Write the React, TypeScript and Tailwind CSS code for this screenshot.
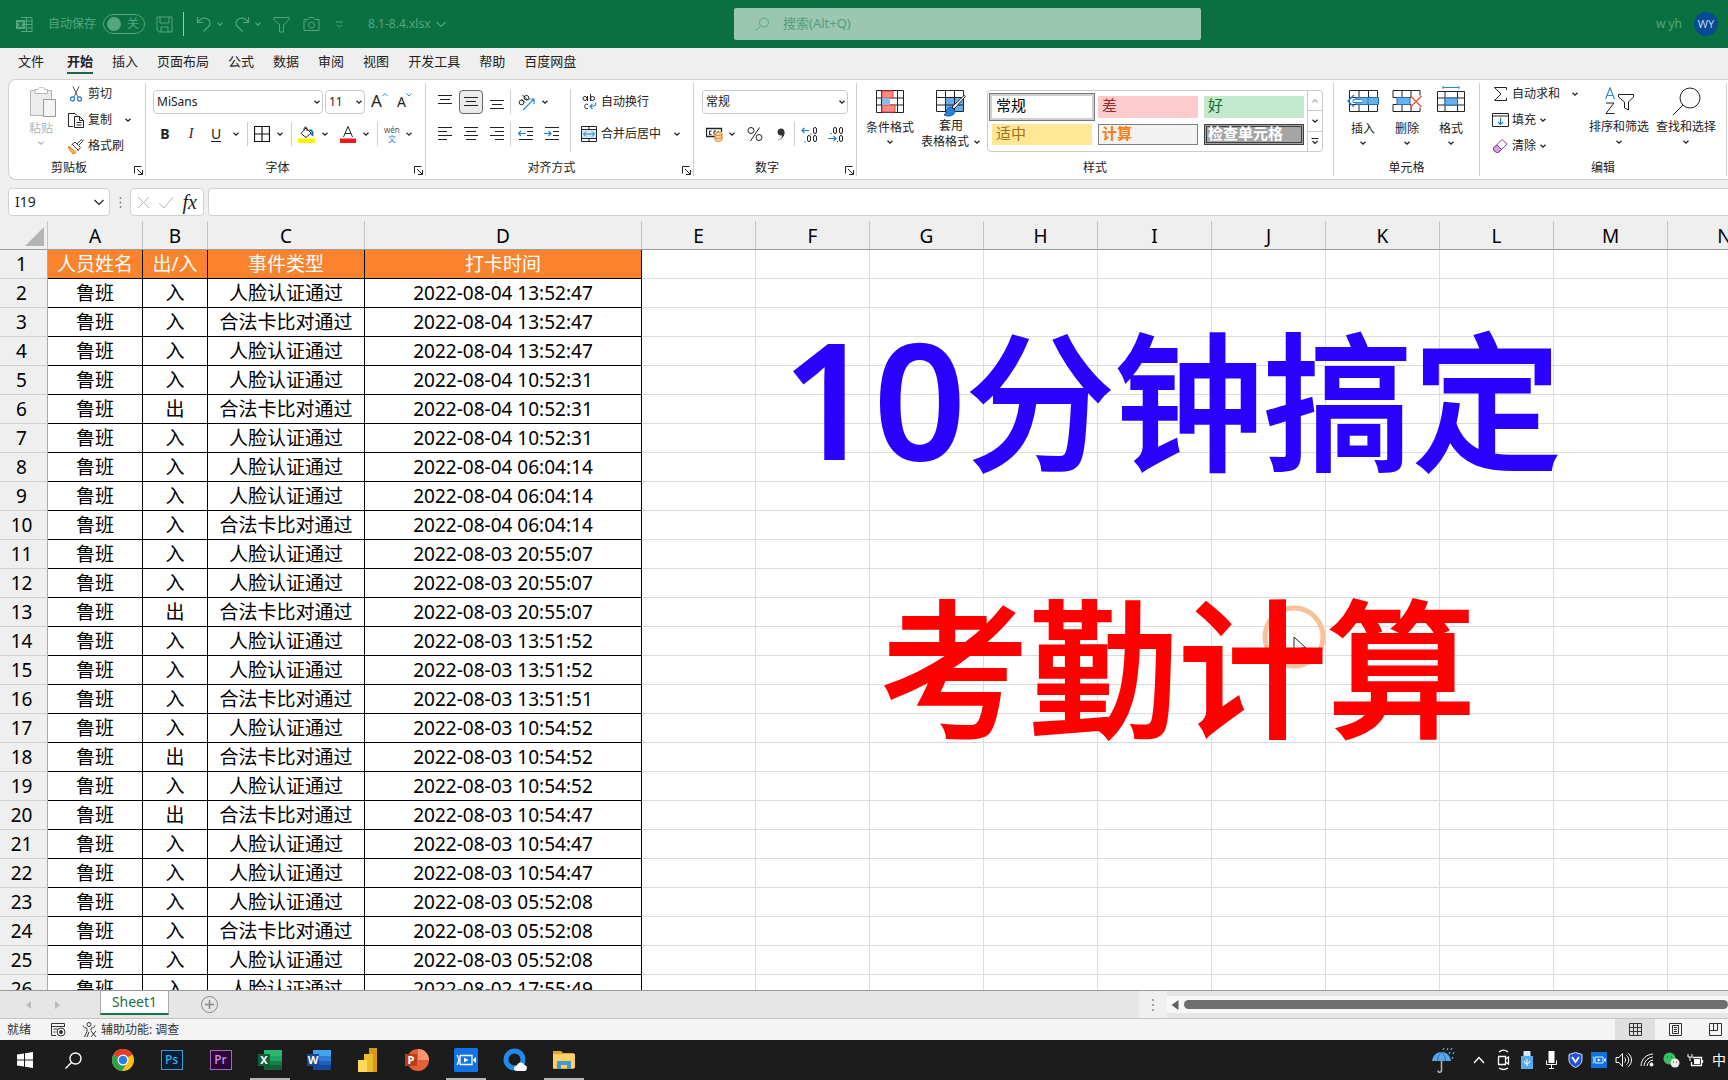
import React from 'react';

type Row = [string, string, string];

const FACE = '人脸认证通过';
const CARD = '合法卡比对通过';

const records: Row[] = [
  ['入', FACE, '2022-08-04 13:52:47'],
  ['入', CARD, '2022-08-04 13:52:47'],
  ['入', FACE, '2022-08-04 13:52:47'],
  ['入', FACE, '2022-08-04 10:52:31'],
  ['出', CARD, '2022-08-04 10:52:31'],
  ['入', FACE, '2022-08-04 10:52:31'],
  ['入', FACE, '2022-08-04 06:04:14'],
  ['入', FACE, '2022-08-04 06:04:14'],
  ['入', CARD, '2022-08-04 06:04:14'],
  ['入', FACE, '2022-08-03 20:55:07'],
  ['入', FACE, '2022-08-03 20:55:07'],
  ['出', CARD, '2022-08-03 20:55:07'],
  ['入', FACE, '2022-08-03 13:51:52'],
  ['入', FACE, '2022-08-03 13:51:52'],
  ['入', CARD, '2022-08-03 13:51:51'],
  ['入', FACE, '2022-08-03 10:54:52'],
  ['出', CARD, '2022-08-03 10:54:52'],
  ['入', FACE, '2022-08-03 10:54:52'],
  ['出', CARD, '2022-08-03 10:54:47'],
  ['入', FACE, '2022-08-03 10:54:47'],
  ['入', FACE, '2022-08-03 10:54:47'],
  ['入', FACE, '2022-08-03 05:52:08'],
  ['入', CARD, '2022-08-03 05:52:08'],
  ['入', FACE, '2022-08-03 05:52:08'],
  ['入', FACE, '2022-08-02 17:55:49'],
];

const emptyColumns = ['E', 'F', 'G', 'H', 'I', 'J', 'K', 'L', 'M', 'N'];

type SvgProps = { w?: number; h?: number; className?: string; children: React.ReactNode };

function Svg({ w = 16, h = w, className = '', children }: SvgProps) {
  return (
    <svg
      width={w}
      height={h}
      viewBox={`0 0 ${w} ${h}`}
      fill="none"
      stroke="currentColor"
      strokeWidth={1}
      className={`shrink-0 ${className}`}
      aria-hidden="true"
    >
      {children}
    </svg>
  );
}

function Chevron({ className = '' }: { className?: string }) {
  return (
    <Svg w={8} className={className}>
      <path d="M1.5 2.7 4 5.2l2.5-2.5" strokeWidth={1.3} />
    </Svg>
  );
}

function WideChevron({ className = '' }: { className?: string }) {
  return (
    <Svg w={12} className={className}>
      <path d="m1.5 4 4.5 4.5L10.5 4" strokeWidth={1.2} />
    </Svg>
  );
}

/* ---------- title bar ---------- */

function TitleBar() {
  return (
    <header className="flex h-12 shrink-0 items-center bg-[#0a7041] text-[#55a67e]">
      <div className="flex w-[734px] shrink-0 items-center pl-4">
        <Svg w={17}>
          <path d="M5 1.5h11v14H5M5 5h11M5 8.500h11M5 12h11M10.500 1.500v14" />
          <path d="M0 4h9v9H0z" fill="currentColor" stroke="none" />
          <path d="m2.500 6 4 5m0-5-4 5" stroke="#0a7041" strokeWidth={1.4} />
        </Svg>
        <span className="ml-[15px] text-xs">自动保存</span>
        <button type="button" role="switch" aria-checked="false" className="ml-[7px] flex h-5 w-[42px] items-center justify-between rounded-full border border-current px-[3px] text-xs">
          <span className="size-[14px] rounded-full bg-current" />
          <span className="mr-[2px]">关</span>
        </button>
        <button type="button" aria-label="保存" className="ml-[11px]">
          <Svg w={17}>
            <path d="M1 1h15v15H3l-2-2zM4 1v6h9V1M5 16v-5h7v5" />
          </Svg>
        </button>
        <span className="ml-[10px] h-6 w-px bg-[#8fd0ae]" />
        <button type="button" aria-label="撤消" className="ml-3 flex items-center gap-1">
          <Svg w={16}>
            <path d="M1.500 1v5.500H7M1.500 6.500C4 3 7 1.500 10.500 2.500c4 1.500 4.500 5.500 2 8L7.500 15.500" strokeWidth={1.2} />
          </Svg>
          <Chevron />
        </button>
        <button type="button" aria-label="恢复" className="ml-[10px] flex items-center gap-1">
          <Svg w={16}>
            <path d="M14.500 1v5.500H9M14.500 6.500C12 3 9 1.500 5.500 2.500c-4 1.500-4.500 5.500-2 8L8.500 15.500" strokeWidth={1.2} />
          </Svg>
          <Chevron />
        </button>
        <button type="button" aria-label="筛选" className="ml-[11px]">
          <Svg w={17}>
            <path d="M1 1.500h15v2L10.500 9v7h-4V9L1 3.500z" />
          </Svg>
        </button>
        <button type="button" aria-label="照相机" className="ml-[13px]">
          <Svg w={17}>
            <path d="M1 3.500h4l1.500-2h4l1.500 2h4v11H1z" />
            <circle cx="8.500" cy="9" r="3" />
            <path d="M2.500 5.500h1.500" />
          </Svg>
        </button>
        <button type="button" aria-label="自定义快速访问工具栏" className="ml-[15px]">
          <Svg w={9}>
            <path d="M1 2h7M2 5l2.500 2L7 5" />
          </Svg>
        </button>
        <span className="ml-6 text-xs">8.1-8.4.xlsx</span>
        <WideChevron className="ml-1" />
      </div>
      <label className="flex h-8 max-w-[467px] flex-1 items-center rounded-xs bg-[#9ac6b2] pl-[21px]">
        <Svg w={15}>
          <circle cx="9" cy="5.500" r="4.500" />
          <path d="M5.500 9 .5 14" />
        </Svg>
        <input type="text" aria-label="搜索" placeholder="搜索(Alt+Q)" className="ml-[13px] min-w-0 flex-1 bg-transparent text-[13px] outline-none placeholder:text-[#4f9f79]" />
      </label>
      <div className="ml-auto flex items-center gap-3 pr-[10px]">
        <span className="text-xs">w yh</span>
        <span className="flex size-6 items-center justify-center rounded-full bg-[#064a94] text-[11px] text-[#b9d3ee]">WY</span>
      </div>
    </header>
  );
}

/* ---------- ribbon tabs ---------- */

const tabs = ['插入', '页面布局', '公式', '数据', '审阅', '视图', '开发工具', '帮助', '百度网盘'];

function TabStrip() {
  return (
    <nav className="flex h-[31px] shrink-0 items-center gap-[19px] pb-[5px] pl-[18px] text-[13px] leading-[26px]">
      <button type="button" className="mr-1">文件</button>
      <button type="button" className="relative font-bold after:absolute after:inset-x-0 after:bottom-0 after:h-[2px] after:bg-[#1c6547]">开始</button>
      {tabs.map((t) => (
        <button type="button" key={t}>{t}</button>
      ))}
    </nav>
  );
}

/* ---------- ribbon ---------- */

function Launcher() {
  return (
    <button type="button" aria-label="更多设置" className="absolute right-[2px] bottom-[1px]">
      <Svg w={9}>
        <path d="M.5 7.500v-7h7M3 3l5 5M8.500 4v4.500H4" />
      </Svg>
    </button>
  );
}

type GroupProps = { label: string; width: string; launcher?: boolean; children: React.ReactNode };

function Group({ label, width, launcher, children }: GroupProps) {
  return (
    <section aria-label={label} className={`relative my-[3px] flex shrink-0 flex-col border-r border-[#cfcfcf] ${width}`}>
      <div className="flex h-[76px] shrink-0">{children}</div>
      <h2 className={`text-center text-xs leading-[18px] font-normal ${launcher ? 'pr-[16px]' : ''}`}>{label}</h2>
      {launcher && <Launcher />}
    </section>
  );
}

function Divider() {
  return <span className="h-6 w-px bg-[#cfcfcf]" />;
}

function DropDown({ label, value, width }: { label: string; value: string; width: string }) {
  return (
    <span className={`relative block h-6 ${width}`}>
      <select aria-label={label} defaultValue={value} className="block size-full appearance-none rounded-sm border border-[#cbcbcb] bg-white pl-[3px] text-xs">
        <option>{value}</option>
      </select>
      <Chevron className="pointer-events-none absolute top-2 right-[2px]" />
    </span>
  );
}

function AlignIcon({ lines }: { lines: [number, number, number][] }) {
  return (
    <Svg w={16}>
      {lines.map(([x1, x2, y]) => (
        <path key={y} d={`M${x1} ${y}.500H${x2}`} />
      ))}
    </Svg>
  );
}

function ClipboardGroup() {
  return (
    <Group label="剪贴板" width="w-[137px]" launcher>
      <button type="button" className="ml-[15px] flex w-[34px] flex-col items-center pt-1 text-xs leading-4 text-[#b5b5b5]">
        <Svg w={28} h={31} className="ml-1">
          <path d="M2 4h20v24H2z" fill="#ececec" stroke="none" />
          <path d="M6 6.500v-4h3c.5-3 6-3 6.500 0h3v4z" fill="#fff" />
          <path d="M1.500 3.500h4.500M22.500 3.500h-4M1.500 3.500v25h13M22.500 3.500V12" />
          <path d="M14.500 12.500h12v17h-12z" fill="#f4f4f4" stroke="#999" />
        </Svg>
        <span className="mt-[3px]">粘贴</span>
        <Chevron className="mt-[2px]" />
      </button>
      <div className="ml-[10px] flex flex-col text-xs">
        <button type="button" className="flex h-[26px] shrink-0 items-center gap-1 pb-1">
          <Svg w={16}>
            <path d="M5 .5 10 11M11 .5 6 11" stroke="#555" />
            <circle cx="4.500" cy="13" r="2" stroke="#2b88d8" strokeWidth={1.3} />
            <circle cx="11.500" cy="13" r="2" stroke="#2b88d8" strokeWidth={1.3} />
          </Svg>
          剪切
        </button>
        <button type="button" className="flex h-[26px] shrink-0 items-center gap-1 pb-1">
          <Svg w={16}>
            <path d="M5 14.500H.5V1.500H7l2 2M6.500 4.500h5l4 4v7h-9zM11.500 4.500v4h4M8.500 10.500h5M8.500 13h5" />
          </Svg>
          复制
          <Chevron className="ml-2" />
        </button>
        <button type="button" className="flex h-[26px] shrink-0 items-center gap-1 pb-1">
          <Svg w={16}>
            <path d="M1 8 8 14.500 5 16C3 13.500 1.500 12 .5 9z" fill="#f7b265" stroke="#e07a10" />
            <path d="m4 6 6.500 6.500M3.500 7 7 4l5.500 5.500-3 3.500M9 6l4-4c1-1 2.500.5 1.500 1.500l-4 4" stroke="#444" />
          </Svg>
          格式刷
        </button>
      </div>
    </Group>
  );
}

function FontGroup() {
  return (
    <Group label="字体" width="w-[280px]" launcher>
      <div className="flex flex-col gap-2 pt-[7px] pl-[7px]">
        <div className="flex h-6 items-center">
          <DropDown label="字体" value="MiSans" width="w-[170px]" />
          <span className="w-[2px]" />
          <DropDown label="字号" value="11" width="w-10" />
          <button type="button" aria-label="增大字号" className="ml-[6px] flex items-start pb-[2px] text-[17px] leading-5">
            A
            <Svg w={6} className="mt-[1px]">
              <path d="m.5 4 2.500-2.500L5.500 4" stroke="#2b88d8" />
            </Svg>
          </button>
          <button type="button" aria-label="减小字号" className="ml-[9px] flex items-start text-[14px] leading-5">
            A
            <Svg w={6}>
              <path d="M.5 1.500 3 4l2.500-2.500" stroke="#2b88d8" />
            </Svg>
          </button>
        </div>
        <div className="flex h-6 items-center text-sm">
          <button type="button" aria-label="加粗" className="w-6 font-bold">B</button>
          <button type="button" aria-label="倾斜" className="ml-[2px] w-6 font-['Liberation_Serif',serif] italic">I</button>
          <button type="button" aria-label="下划线" className="ml-[1px] w-6 underline underline-offset-2">U</button>
          <Chevron className="ml-1" />
          <span className="w-[7px]" />
          <Divider />
          <button type="button" aria-label="边框" className="ml-[6px] flex items-center gap-[6px]">
            <Svg w={16}>
              <path d="M.5.500h15v15H.5zM8 .5v15M.5 8h15" stroke="#111" strokeWidth={1.2} />
            </Svg>
            <Chevron />
          </button>
          <span className="w-[7px]" />
          <Divider />
          <button type="button" aria-label="填充颜色" className="ml-[6px] flex items-center gap-[6px]">
            <Svg w={17}>
              <path d="M3 7.500 8 2l5 5-5 4.500zM6 4.500C5.500 1 8.500-.5 9 2.500V5" />
              <path d="M11.500 4c2.500 0 3.500 2 3 5l-1.500-1" stroke="#1767ab" strokeWidth={1.8} />
              <path d="M0 12.500h17V17H0z" fill="#fff100" stroke="none" />
            </Svg>
            <Chevron />
          </button>
          <button type="button" aria-label="字体颜色" className="ml-[11px] flex items-center gap-[6px]">
            <Svg w={16} h={17}>
              <path d="M3.500 11 8 .5 12.500 11M5 7.500h6" />
              <path d="M0 12.500h16V17H0z" fill="#f01818" stroke="none" />
            </Svg>
            <Chevron />
          </button>
          <span className="w-[7px]" />
          <Divider />
          <button type="button" aria-label="显示或隐藏拼音字段" className="ml-[6px] flex items-center gap-[5px]">
            <span className="flex flex-col items-center text-[8px] leading-[9px] text-[#555]">
              <span>wén</span>
              <span className="text-[#2b88d8]">文</span>
            </span>
            <Chevron className="text-[#333]" />
          </button>
        </div>
      </div>
    </Group>
  );
}

function AlignmentGroup() {
  return (
    <Group label="对齐方式" width="w-[268px]" launcher>
      <div className="flex flex-col gap-2 pt-[7px] pl-[6px]">
        <div className="flex h-6 items-center">
          <button type="button" aria-label="顶端对齐" className="flex w-[26px] justify-center">
            <AlignIcon lines={[[1, 15, 1], [3, 13, 5], [1, 15, 9]]} />
          </button>
          <button type="button" aria-label="垂直居中" aria-pressed="true" className="mx-[1px] flex size-6 items-center justify-center rounded-sm border border-[#666] bg-[#ebebeb]">
            <AlignIcon lines={[[1, 15, 3], [3, 13, 7], [1, 15, 11]]} />
          </button>
          <button type="button" aria-label="底端对齐" className="flex w-[26px] justify-center">
            <AlignIcon lines={[[1, 15, 6], [3, 13, 10], [1, 15, 14]]} />
          </button>
        </div>
        <div className="flex h-6 items-center">
          <button type="button" aria-label="左对齐" className="flex w-[26px] justify-center">
            <AlignIcon lines={[[1, 15, 1], [1, 10, 5], [1, 15, 9], [1, 10, 13]]} />
          </button>
          <button type="button" aria-label="居中" className="flex w-[26px] justify-center">
            <AlignIcon lines={[[1, 15, 1], [3, 13, 5], [1, 15, 9], [3, 13, 13]]} />
          </button>
          <button type="button" aria-label="右对齐" className="flex w-[26px] justify-center">
            <AlignIcon lines={[[1, 15, 1], [6, 15, 5], [1, 15, 9], [6, 15, 13]]} />
          </button>
        </div>
      </div>
      <div className="flex flex-col gap-2 pt-[7px]">
        <div className="flex h-6 items-center">
          <Divider />
          <button type="button" aria-label="方向" className="ml-[7px] flex items-center gap-[6px]">
            <Svg w={17}>
              <circle cx="3.500" cy="8.500" r="2.300" />
              <path d="M3.500 5 7 8.500M4.500 1 10 6.500" />
              <circle cx="8.500" cy="3.700" r="2.300" />
              <path d="m5 16 10.500-10.500M11 5h5v5" stroke="#2b88d8" strokeWidth={1.2} />
            </Svg>
            <Chevron />
          </button>
        </div>
        <div className="flex h-6 items-center">
          <Divider />
          <button type="button" aria-label="减少缩进量" className="ml-[7px]">
            <Svg w={16}>
              <path d="M1 1.500h14M9 5.500h6M9 9.500h6M1 13.500h14" />
              <path d="M7.500 7.500h-7M3 5 .5 7.500 3 10" stroke="#1a7fd0" strokeWidth={1.2} />
            </Svg>
          </button>
          <button type="button" aria-label="增加缩进量" className="ml-[10px]">
            <Svg w={16}>
              <path d="M1 1.500h14M9 5.500h6M9 9.500h6M1 13.500h14" />
              <path d="M0 7.500h7M4.500 5 7 7.500 4.500 10" stroke="#1a7fd0" strokeWidth={1.2} />
            </Svg>
          </button>
        </div>
      </div>
      <div className="mt-[6px] ml-[10px] flex h-[63px] flex-col gap-2 border-l border-[#cfcfcf] pt-[1px] pl-[10px] text-xs">
        <button type="button" className="flex h-6 items-center gap-1">
          <Svg w={16}>
            <circle cx="4" cy="4.500" r="2" />
            <path d="M6.500 2v5M9.500 0v7M7 10.500c-4-2-5 5 0 4" />
            <circle cx="11.500" cy="4.500" r="2" />
            <path d="M14.500 8.500c1 3-1 4-5.500 4M11.500 10 9 12.500l2.500 2.500" stroke="#2b88d8" strokeWidth={1.2} />
          </Svg>
          自动换行
        </button>
        <button type="button" className="flex h-6 items-center gap-1">
          <Svg w={16}>
            <path d="M.5.500h15v15H.5zM.5 3.500h15M.5 12.500h15M8 .5v3M8 12.500v3" />
            <path d="M1 4h14v8H1z" fill="#d3e9f8" stroke="none" />
            <path d="M2.500 8h11M5 5.500 2.500 8 5 10.500M11 5.500 13.500 8 11 10.500" stroke="#1a7fd0" />
          </Svg>
          合并后居中
          <Chevron className="ml-2" />
        </button>
      </div>
    </Group>
  );
}

function DecimalIcon({ grow }: { grow?: boolean }) {
  return (
    <Svg w={17}>
      {grow ? (
        <>
          <path d="M10 7.500v1M4 15.500v1" />
          <rect x="12.500" y="1.500" width="3" height="6" rx="1.500" />
          <rect x="6.500" y="9.500" width="3" height="6" rx="1.500" />
          <rect x="12.500" y="9.500" width="3" height="6" rx="1.500" />
          <path d="M8 4.500H1M3.500 2 1 4.500 3.500 7" stroke="#1a7fd0" strokeWidth={1.2} />
        </>
      ) : (
        <>
          <path d="M4 7v1M10.500 15v1" />
          <rect x="6.500" y="1.500" width="3" height="6" rx="1.500" />
          <rect x="12.500" y="1.500" width="3" height="6" rx="1.500" />
          <rect x="12.500" y="9.500" width="3" height="6" rx="1.500" />
          <path d="M1 12.500h8M6.500 10 9 12.500 6.500 15" stroke="#1a7fd0" strokeWidth={1.2} />
        </>
      )}
    </Svg>
  );
}

function NumberGroup() {
  return (
    <Group label="数字" width="w-[163px]" launcher>
      <div className="flex flex-col gap-2 pt-[7px] pl-2">
        <DropDown label="数字格式" value="常规" width="w-[146px]" />
        <div className="flex h-6 items-center">
          <button type="button" aria-label="会计数字格式" className="ml-1 flex items-center gap-1">
            <Svg w={18} h={16}>
              <path d="M9 10.500H.5v-8h15V6" strokeWidth={1.300} />
              <path d="M5.500 5h-2v3.500h2M10 5H8v3.500M12 5v2" />
              <path d="M9 8c0-2.500 7-2.500 7 0v5.500c0 2.500-7 2.500-7 0z" fill="#fbd9a8" stroke="#e07a10" />
              <path d="M9 8c0 2 7 2 7 0M9 11c0 2 7 2 7 0" stroke="#e07a10" />
            </Svg>
            <Chevron />
          </button>
          <button type="button" aria-label="百分比样式" className="ml-[11px]">
            <Svg w={16}>
              <circle cx="4" cy="4.500" r="3" />
              <circle cx="12" cy="11.500" r="3" />
              <path d="M12.500 1.500 3.500 15" />
            </Svg>
          </button>
          <button type="button" aria-label="千位分隔样式" className="ml-[13px]">
            <Svg w={10} h={14}>
              <path d="M2 13c3.500-1.500 4-3 4-4.500C3 9 1.500 7 1.500 5 1.500 3 3 1.500 5 1.500c5.500 0 5 9.500-3 12z" fill="#333" stroke="none" />
            </Svg>
          </button>
          <span className="w-2" />
          <Divider />
          <button type="button" aria-label="增加小数位数" className="ml-[6px]"><DecimalIcon grow /></button>
          <button type="button" aria-label="减少小数位数" className="ml-[9px]"><DecimalIcon /></button>
        </div>
      </div>
    </Group>
  );
}

function StyleCell({ name, look }: { name: string; look: string }) {
  return (
    <button type="button" className={`flex items-start text-left text-[15px] whitespace-nowrap ${look}`}>{name}</button>
  );
}

function StylesGroup() {
  return (
    <Group label="样式" width="w-[477px]">
      <button type="button" className="ml-[9px] flex w-12 flex-col items-center pt-[7px] text-xs leading-4">
        <Svg w={28} h={23}>
          <path d="M.5.500h27v22H.5z" fill="#fff" />
          <path d="M5.500.5v22M21.500.5v22M.5 8h27M.5 15h27" />
          <path d="M6 1h11v7H6zM6 15h13v7H6z" fill="#ff8b85" stroke="#e0433a" />
          <path d="M6 8h8v7H6z" fill="#83beec" stroke="none" />
        </Svg>
        <span className="mt-[7px]">条件格式</span>
        <Chevron className="mt-[2px]" />
      </button>
      <button type="button" className="ml-[7px] flex w-[60px] flex-col items-center pt-[7px] text-xs leading-4">
        <Svg w={30} h={28}>
          <path d="M10 8h17v14H10z" fill="#69aeea" stroke="none" />
          <path d="M.5.500h27v21H.5zM.5 7.500h27M.5 15h27M9.500.5v21M18.500.5v21" />
          <path d="M29 7 18 19l-2-2L27.500 6c1-1 2.500 0 1.500 1z" fill="#fff" />
          <path d="M15 17c-5 0-4 6-7 8 5 2.500 11 .5 11-4z" fill="#2b7fd0" stroke="#1b5fa8" />
        </Svg>
        <span>套用</span>
        <span className="flex items-center gap-1 self-start whitespace-nowrap">表格格式<Chevron /></span>
      </button>
      <div className="mt-[7px] ml-[6px] flex h-[62px] w-[336px] rounded-sm border border-[#cbcbcb]">
        <div className="grid flex-1 grid-cols-3 grid-rows-2 pt-[2px] pb-[3px] pl-[1px]">
          <StyleCell name="常规" look="border border-[#777] bg-white pt-[1px] pl-[6px] leading-5 text-black shadow-[inset_0_0_0_2px_#cfcfcf]" />
          <StyleCell name="差" look="m-[3px] bg-[#fecbcd] pl-[4px] leading-[18px] text-[#9c2a2a]" />
          <StyleCell name="好" look="m-[3px] bg-[#c2e8cd] pl-[4px] leading-[18px] text-[#186a2b]" />
          <StyleCell name="适中" look="m-[3px] bg-[#ffe796] pl-[4px] leading-[18px] text-[#a4701a]" />
          <StyleCell name="计算" look="m-[3px] border border-[#7f7f7f] bg-[#f2f2f2] pl-[3px] leading-4 font-bold text-[#fa7d12]" />
          <StyleCell name="检查单元格" look="m-[3px] border-[3px] border-double border-[#3f3f3f] bg-[#a5a5a5] pl-[1px] leading-3 font-bold text-white" />
        </div>
        <div className="flex w-[15px] flex-col border-l border-[#cbcbcb] [&>button]:flex [&>button]:flex-1 [&>button]:items-center [&>button]:justify-center">
          <button type="button" aria-label="上一行" className="border-b border-[#cbcbcb] text-[#aaa]">
            <Chevron className="rotate-180" />
          </button>
          <button type="button" aria-label="下一行" className="border-b border-[#cbcbcb]"><Chevron /></button>
          <button type="button" aria-label="其他样式">
            <Svg w={8}>
              <path d="M.5 1.500h7M1.500 4 4 6.500 6.500 4" strokeWidth={1.2} />
            </Svg>
          </button>
        </div>
      </div>
    </Group>
  );
}

function CellsGroup() {
  const button = 'flex w-11 flex-col items-center text-xs leading-4';
  return (
    <Group label="单元格" width="w-[146px]">
      <button type="button" className={`ml-[7px] ${button}`}>
        <Svg w={32} h={28} className="mt-[3px]">
          <path d="M2.500 4.500h28v21h-28zM12 4.500v21M21.500 4.500v21M2.500 11.500h28M2.500 18.500h28" />
          <path d="M9 11.500h22.500v7H9z" fill="#6cb2ea" stroke="#1b73bd" />
          <path d="M21 11.500v7" stroke="#1b73bd" />
          <path d="M15 13.500H6v3h9" fill="#fff" stroke="#2b88d8" />
          <path d="m7 9-6 6 6 6" stroke="#2b88d8" strokeWidth={1.5} />
        </Svg>
        <span className="mt-[7px]">插入</span>
        <Chevron className="mt-[2px]" />
      </button>
      <button type="button" className={button}>
        <Svg w={30} h={28} className="mt-[3px]">
          <path d="M1 11.500V4.500h27v5M10 4.500v7M19 4.500v7M1 18.500v7h27v-4M10 18.500v7M19 18.500v7M1 11.500h18M1 18.500h18" />
          <path d="M5 11.500h13v7H5z" fill="#6cb2ea" stroke="#1b73bd" />
          <path d="m18.500 10 11 11m0-11-11 11" stroke="#f0503c" strokeWidth={1.300} />
        </Svg>
        <span className="mt-[7px]">删除</span>
        <Chevron className="mt-[2px]" />
      </button>
      <button type="button" className={button}>
        <Svg w={28} h={28} className="mt-[3px]">
          <path d="M6 1.500h16M6 0v3M22 0v3" stroke="#2b88d8" />
          <path d="M.5 5.500h27v20H.5zM8 5.500v20M20.500 5.500v20M.5 12h27M.5 19h27" />
          <path d="M8 12h12.500v7H8z" fill="#6cb2ea" stroke="#1b73bd" />
        </Svg>
        <span className="mt-[7px]">格式</span>
        <Chevron className="mt-[2px]" />
      </button>
    </Group>
  );
}

function EditingGroup() {
  return (
    <Group label="编辑" width="w-[247px]">
      <div className="ml-3 flex w-[90px] flex-col text-xs">
        <button type="button" className="flex h-[26px] shrink-0 items-center gap-[3px] pb-1">
          <Svg w={17} h={16}>
            <path d="M14.500 4V1.500h-12l6.500 6.500-6.500 6.500h12V12" />
          </Svg>
          自动求和
          <Chevron className="ml-2" />
        </button>
        <button type="button" className="flex h-[26px] shrink-0 items-center gap-[3px] pb-1">
          <Svg w={17} h={16}>
            <path d="M.5 1.500h16v13H.5zM.5 4h16" />
            <path d="M8.500 5.500v7M6 10l2.500 2.500L11 10" stroke="#1a7fd0" strokeWidth={1.2} />
          </Svg>
          填充
          <Chevron />
        </button>
        <button type="button" className="flex h-[26px] shrink-0 items-center gap-[3px] pb-1">
          <Svg w={17} h={16}>
            <path d="M1.500 10 10 1.500l5 4.500-8.500 8.500H4.500L1.500 12z" fill="#fff" stroke="#8a3f96" />
            <path d="m1.500 10 3.500-3 4.500 4.500-3.500 3H4.500L1.500 12z" fill="#d9a3dd" stroke="#8a3f96" />
          </Svg>
          清除
          <Chevron />
        </button>
      </div>
      <button type="button" className="ml-1 flex w-[66px] flex-col items-center pt-1 text-xs leading-4 whitespace-nowrap">
        <Svg w={29} h={28}>
          <path d="M.5 12 5 1l4.500 11M2 8.500h6" stroke="#2b88d8" strokeWidth={1.2} />
          <path d="M1 16h8L1 26.500h8.500M13.500 7.500h15v2.500L23.500 15v8l-4-2v-6l-6-5z" />
        </Svg>
        <span className="mt-1">排序和筛选</span>
        <Chevron className="mt-[3px]" />
      </button>
      <button type="button" className="ml-[1px] flex w-[66px] flex-col items-center pt-1 text-xs leading-4 whitespace-nowrap">
        <Svg w={30} h={28}>
          <circle cx="19" cy="11" r="10" fill="#fafafa" />
          <path d="M12 18 2 28" />
        </Svg>
        <span className="mt-1">查找和选择</span>
        <Chevron className="mt-[3px]" />
      </button>
    </Group>
  );
}

function Ribbon() {
  return (
    <div className="ml-2 flex h-[101px] shrink-0 overflow-hidden rounded-l-lg border border-r-0 border-[#d2d2d2] bg-white text-[#222]">
      <ClipboardGroup />
      <FontGroup />
      <AlignmentGroup />
      <NumberGroup />
      <StylesGroup />
      <CellsGroup />
      <EditingGroup />
    </div>
  );
}

/* ---------- formula bar ---------- */

function FormulaBar() {
  const box = 'h-[28px] rounded-sm border border-[#d2d2d2] bg-white';
  return (
    <div className="mt-2 ml-2 flex shrink-0 items-center">
      <div className={`flex w-[102px] items-center pr-1 pl-[6px] ${box}`}>
        <input type="text" aria-label="名称框" defaultValue="I19" className="min-w-0 flex-1 text-sm outline-none" />
        <WideChevron />
      </div>
      <Svg w={3} h={11} className="mr-2 ml-[9px] text-[#888]">
        <path d="M1.500 0v2M1.500 4.500v2M1.500 9v2" strokeWidth={1.5} />
      </Svg>
      <div className={`flex w-[74px] items-center justify-between px-[6px] text-[#b8b8b8] ${box}`}>
        <button type="button" aria-label="取消">
          <Svg w={13}><path d="m1 1 11 11m0-11L1 12" /></Svg>
        </button>
        <button type="button" aria-label="输入">
          <Svg w={16} h={13}><path d="m1 7 5 5L15 1" /></Svg>
        </button>
        <button type="button" aria-label="插入函数" className="font-['Liberation_Serif',serif] text-xl leading-6 text-[#222] italic">fx</button>
      </div>
      <input type="text" aria-label="编辑栏" className={`ml-1 min-w-0 flex-1 rounded-r-none border-r-0 px-2 text-sm outline-none ${box}`} />
    </div>
  );
}

/* ---------- sheet ---------- */

function Sheet() {
  const black = 'border-r border-b border-black';
  const grid = 'border-r border-b border-[#dcdcdc]';
  const colHead = 'border-r border-b border-r-[#c4c4c4] border-b-[#9b9b9b] pt-[3px] font-normal leading-[25px]';
  return (
    <main className="relative mt-[5px] min-h-0 flex-1 overflow-hidden bg-white">
      <table className="w-[1782px] table-fixed border-separate border-spacing-0 text-center text-[19px] leading-[28px] text-black">
        <colgroup>
          <col className="w-12" />
          <col className="w-[95px]" />
          <col className="w-[65px]" />
          <col className="w-[157px]" />
          <col className="w-[277px]" />
          {emptyColumns.map((c) => (
            <col key={c} className="w-[114px]" />
          ))}
        </colgroup>
        <thead>
          <tr className="h-[29px] bg-[#efefef]">
            <th className={colHead} aria-label="全选">
              <Svg w={19} className="mr-[3px] ml-auto">
                <path d="M19 0v19H0z" fill="#b4b4b4" stroke="none" />
              </Svg>
            </th>
            {['A', 'B', 'C', 'D', ...emptyColumns].map((c) => (
              <th key={c} scope="col" className={colHead}>{c}</th>
            ))}
          </tr>
        </thead>
        <tbody>
          <tr className="h-[29px]">
            <th scope="row" className="border-r border-b border-r-[#aaa] border-b-[#d0d0d0] bg-[#efefef] pr-1 font-normal">1</th>
            {['人员姓名', '出/入', '事件类型', '打卡时间'].map((h) => (
              <td key={h} className={`bg-[#fc832d] text-white ${black}`}>{h}</td>
            ))}
            {emptyColumns.map((c) => (
              <td key={c} className={grid} />
            ))}
          </tr>
          {records.map(([dir, kind, time], i) => (
            <tr key={i} className="h-[29px]">
              <th scope="row" className="border-r border-b border-r-[#aaa] border-b-[#d0d0d0] bg-[#efefef] pr-1 font-normal">{i + 2}</th>
              <td className={black}>鲁班</td>
              <td className={black}>{dir}</td>
              <td className={black}>{kind}</td>
              <td className={black}>{time}</td>
              {emptyColumns.map((c) => (
                <td key={c} className={grid} />
              ))}
            </tr>
          ))}
        </tbody>
      </table>
      <svg width="64" height="64" viewBox="0 0 64 64" className="absolute top-[384px] left-[1262px]" aria-hidden="true">
        <circle cx="32" cy="32" r="29" fill="none" stroke="#f8c19b" strokeWidth="5" />
        <path d="M32 32v16l4-4 3 6 3-1-3-6h5z" fill="#fff" stroke="#222" />
      </svg>
      <div className="absolute top-[41px] left-[642px] w-[1072px] text-center font-['Noto_Sans_CJK_SC',sans-serif] text-[149px] leading-[264px] font-medium whitespace-nowrap [-webkit-text-stroke:2px_currentColor]">
        <p className="pr-3 text-[#2a00ff]">
          <span className="font-['Open_Sans',sans-serif] text-[160px] font-semibold">10</span>分钟搞定
        </p>
        <p className="text-[#ff0000]">考勤计算</p>
      </div>
    </main>
  );
}

/* ---------- sheet tabs and status ---------- */

function SheetBar() {
  return (
    <div className="flex h-7 shrink-0 items-center border-t border-[#999] bg-[#e6e6e6] text-[#bbb]">
      <button type="button" aria-label="上一个工作表" className="ml-[25px]">
        <Svg w={8}><path d="M6 0v8L1 4z" fill="currentColor" stroke="none" /></Svg>
      </button>
      <button type="button" aria-label="下一个工作表" className="ml-5">
        <Svg w={8}><path d="M2 0v8l5-4z" fill="currentColor" stroke="none" /></Svg>
      </button>
      <button type="button" className="ml-[39px] h-6 w-[69px] self-start border-x border-b-2 border-x-[#aaa] border-b-[#1f7049] bg-white text-sm leading-5 text-[#1f6b48]">Sheet1</button>
      <button type="button" aria-label="新工作表" className="ml-8 text-[#888]">
        <Svg w={17}>
          <circle cx="8.500" cy="8.500" r="8" />
          <path d="M8.500 4v9M4 8.500h9" strokeWidth={1.5} />
        </Svg>
      </button>
      <div className="ml-auto flex h-full w-[589px] items-center bg-[#f0f0f0]">
        <Svg w={2} h={12} className="ml-[13px] text-[#888]">
          <path d="M1 0v2M1 5v2M1 10v2" strokeWidth={1.5} />
        </Svg>
        <div className="ml-[13px] flex h-full flex-1 items-center bg-[#e6e6e6]">
          <div className="flex h-[17px] flex-1 items-center bg-[#f7f7f7] pl-1">
            <Svg w={8} h={10}><path d="M7.500 0v10L.5 5z" fill="#606060" stroke="none" /></Svg>
            <span className="ml-[5px] h-[9px] flex-1 rounded-full bg-[#6f6f6f]" />
          </div>
        </div>
      </div>
    </div>
  );
}

function StatusBar() {
  return (
    <footer className="flex h-[22px] shrink-0 items-center overflow-hidden border-t border-[#c4c4c4] bg-[#f4f4f4] pl-[7px] text-xs text-[#333]">
      <span>就绪</span>
      <Svg w={15} h={14} className="ml-5">
        <path d="M5 12.500H.5V.500h13V4M.5 3.500h13M2.500 6h4M2.500 9h2" />
        <circle cx="10" cy="9" r="4" />
        <circle cx="10" cy="9" r="1.500" fill="currentColor" />
      </Svg>
      <button type="button" className="ml-[16px] flex items-center gap-1">
        <Svg w={15} h={16}>
          <circle cx="7" cy="2.500" r="2" />
          <path d="M1 3.500c0 2 3 2 4 3v3l-2.500 5.500M13 3.500c0 2-3 2-4 3v2M9 9l5 6m0-6-5 6M7 10l-2 5" />
        </Svg>
        辅助功能: 调查
      </button>
      <div className="ml-auto flex h-full w-[113px] shrink-0 [&>button]:flex [&>button]:w-10 [&>button]:shrink-0 [&>button]:items-center [&>button]:justify-center">
        <button type="button" aria-label="普通视图" aria-pressed="true" className="bg-[#dfdfdf]">
          <Svg w={13}><path d="M.5.500h12v12H.5zM4.500.5v12M8.500.5v12M.5 4.500h12M.5 8.500h12" /></Svg>
        </button>
        <button type="button" aria-label="页面布局视图">
          <Svg w={13}><path d="M.5.500h12v12H.5zM3.500 2.500h6v8h-6zM5 4.500h3M5 6.500h3M5 8.500h3" /></Svg>
        </button>
        <button type="button" aria-label="分页预览">
          <Svg w={13}><path d="M.5.500h12v12H.5zM.5 7.500h8v-7M4.500.5v7" /></Svg>
        </button>
      </div>
    </footer>
  );
}

/* ---------- task bar ---------- */

function LetterBox({ text, look }: { text: string; look: string }) {
  return (
    <span className={`flex h-5 w-[22px] items-center justify-center border text-xs leading-4 font-medium ${look}`}>{text}</span>
  );
}

function OfficeIcon({ letter, colors }: { letter: string; colors: [string, string, string, string] }) {
  return (
    <svg width="24" height="24" viewBox="0 0 24 24" aria-hidden="true">
      <path d="M6 2h18v6H6z" fill={colors[0]} />
      <path d="M6 8h18v5H6z" fill={colors[1]} />
      <path d="M6 13h18v5H6z" fill={colors[2]} />
      <path d="M6 17h18v5H6z" fill={colors[3]} />
      <path d="M0 6h12v12H0z" fill={colors[3]} />
      <text x="6" y="16" textAnchor="middle" fill="#fff" fontSize="11" fontWeight="700">{letter}</text>
    </svg>
  );
}

function CameraIcon({ size }: { size: number }) {
  return (
    <svg width={size} height={size} viewBox="0 0 24 24" fill="none" aria-hidden="true">
      <rect width="24" height="24" rx="1.500" fill="#1273e6" />
      <path d="M3 7c2 3 2 7 0 10M6 7.500h12v9H6z" stroke="#fff" strokeWidth="1.300" />
      <path d="m10 9.500 4.500 2.500-4.500 2.500z" fill="#fff" />
      <path d="M19.500 11 22 9v6l-2.500-2z" fill="#fff" />
    </svg>
  );
}

const apps: { name: string; active?: boolean; icon: React.ReactNode }[] = [
  {
    name: '开始',
    icon: (
      <Svg w={16}>
        <path d="M0 2.500 7 1.500v6H0zM8 1.300 16 0v7.500H8zM0 8.500h7v6l-7-1zM8 8.500h8V16l-8-1.300z" fill="#fff" stroke="none" />
      </Svg>
    ),
  },
  {
    name: '搜索',
    icon: (
      <Svg w={17} className="text-white">
        <circle cx="10.500" cy="6.500" r="5.500" strokeWidth={1.4} />
        <path d="M6.500 10.500.5 16.500" strokeWidth={1.4} />
      </Svg>
    ),
  },
  {
    name: 'Chrome',
    icon: (
      <svg width="24" height="24" viewBox="0 0 24 24" aria-hidden="true">
        <circle cx="12" cy="12" r="11" fill="#fbc116" />
        <path d="M12 12 2.500 6.500a11 11 0 0 1 19 0z" fill="#e33b2e" />
        <path d="M12 12 2.500 6.500A11 11 0 0 0 11 23l5.500-9z" fill="#2da14c" />
        <circle cx="12" cy="12" r="5.500" fill="#fff" />
        <circle cx="12" cy="12" r="4.300" fill="#2f7ae5" />
      </svg>
    ),
  },
  { name: 'Photoshop', icon: <LetterBox text="Ps" look="border-[#2c9fd0] bg-[#061d33] text-[#35b5ea]" /> },
  { name: 'Premiere', icon: <LetterBox text="Pr" look="border-[#a765c0] bg-[#2d0638] text-[#d391ea]" /> },
  { name: 'Excel', active: true, icon: <OfficeIcon letter="X" colors={['#2bb673', '#21a366', '#17804a', '#155e3a']} /> },
  { name: 'Word', icon: <OfficeIcon letter="W" colors={['#41a5ee', '#2b7cd3', '#1f5fbe', '#17469b']} /> },
  {
    name: 'Power BI',
    icon: (
      <svg width="24" height="24" viewBox="0 0 24 24" aria-hidden="true">
        <path d="M13 0h8v24h-8z" fill="#d69a13" />
        <path d="M8 6h9v18H8z" fill="#f0bb2a" />
        <path d="M2 12h9v12H2z" fill="#ffd95c" />
      </svg>
    ),
  },
  {
    name: 'PowerPoint',
    icon: (
      <svg width="24" height="24" viewBox="0 0 24 24" aria-hidden="true">
        <circle cx="13" cy="12" r="11" fill="#e0603a" />
        <path d="M13 1a11 11 0 0 1 11 11H13z" fill="#ff9570" />
        <path d="M0 6h12v12H0z" fill="#bd3a1a" />
        <text x="6" y="16" textAnchor="middle" fill="#fff" fontSize="11" fontWeight="700">P</text>
      </svg>
    ),
  },
  { name: '录屏', active: true, icon: <CameraIcon size={24} /> },
  {
    name: 'QQ浏览器',
    icon: (
      <svg width="24" height="24" viewBox="0 0 24 24" fill="none" aria-hidden="true">
        <circle cx="11.500" cy="11.500" r="8.500" stroke="#2489ea" strokeWidth="5" />
        <path d="M14 23c-4 0-4-5 0-5.500 1-4 6.500-4 7.500-.5 3.500.5 3 6 0 6z" fill="#fff" />
      </svg>
    ),
  },
  {
    name: '文件资源管理器',
    active: true,
    icon: (
      <svg width="24" height="24" viewBox="0 0 24 24" aria-hidden="true">
        <path d="M1 3h8l2 2h11v16H1z" fill="#e0a526" />
        <path d="M1 6h22v14H1z" fill="#ffd168" />
        <path d="M5 21v-8h14v8h-4v-4H9v4z" fill="#4298cf" />
      </svg>
    ),
  },
];

const tray: { name: string; icon: React.ReactNode }[] = [
  { name: '显示隐藏的图标', icon: <Svg w={12}><path d="m1 9 5-5.500L11 9" strokeWidth={1.400} /></Svg> },
  {
    name: '会议',
    icon: (
      <Svg w={13} h={22}>
        <path d="M1.500 7.500h7v8h-7zM8.500 10l3-2v7l-3-2M2 3c3-2.500 6-2.500 9 0M2 19c3 2 6 2 9 0" strokeWidth={1.300} />
      </Svg>
    ),
  },
  {
    name: 'U 盘',
    icon: (
      <Svg w={12} h={18}>
        <path d="M2.500 0h7v5h-7z" fill="#d7e6f5" stroke="none" />
        <path d="M0 5h12v13H0z" fill="#5aa9e8" stroke="none" />
        <path d="M6 8v7M3.500 10v1.500L6 13l2.500-1.500V10M4 2h1M7 2h1" stroke="#fff" />
      </Svg>
    ),
  },
  {
    name: '麦克风',
    icon: (
      <Svg w={11} h={18}>
        <path d="M2.500 0h6v12h-6z" fill="#fff" stroke="none" />
        <path d="M.5 9.500v4h10v-4M5.500 14v3.500M3 17.500h5" />
      </Svg>
    ),
  },
  {
    name: '安全中心',
    icon: (
      <Svg w={15} h={16}>
        <path d="M7.500.5 14 2.500v5c0 4-3 6.500-6.500 8C4 14 1 11.500 1 7.500v-5z" fill="#2850dc" stroke="#dce6ff" />
        <path d="m4 5 3.500 5L11 5" stroke="#fff" strokeWidth={1.800} />
      </Svg>
    ),
  },
  { name: '录屏工具', icon: <CameraIcon size={16} /> },
  {
    name: '音量',
    icon: (
      <Svg w={17} h={16}>
        <path d="M1 5.500h3l3.500-4v13L4 10.500H1zM9.500 5.500c1.500 1.500 1.500 3.500 0 5M11.500 3.500c3 2.500 3 6.500 0 9M13.500 1.500c4 4 4 9 0 13" />
      </Svg>
    ),
  },
  {
    name: '网络',
    icon: (
      <Svg w={14}>
        <path d="M1 13C1.500 6 6 1.500 13 1M4 13c.5-5 4-8.500 9-9M7 13c.5-3.500 3-5.500 6-6" />
        <circle cx="11.500" cy="11.500" r="1.500" fill="#fff" />
      </Svg>
    ),
  },
  {
    name: '微信',
    icon: (
      <Svg w={17} h={16}>
        <circle cx="6.500" cy="6.500" r="6" fill="#35c263" stroke="none" />
        <circle cx="12" cy="11" r="4.500" fill="#f0e8e8" stroke="none" />
        <path d="M4 5h1M8 5h1M10 10h1M13 10h1" stroke="#184a28" />
      </Svg>
    ),
  },
  {
    name: '电池',
    icon: (
      <Svg w={17} h={14}>
        <path d="M5.500 4.500h9v8h-10V9M15.500 7v3" strokeWidth={1.300} />
        <path d="M7 6h6v5H7z" fill="#fff" stroke="none" />
        <path d="M1 1v3h4V1M3 4v4" />
      </Svg>
    ),
  },
  { name: '输入法', icon: <span className="text-sm text-white">中</span> },
];

function TaskBar() {
  return (
    <div className="flex h-10 shrink-0 overflow-hidden bg-[#1c1c1c]">
      <div className="flex">
        {apps.map((a) => (
          <button type="button" key={a.name} aria-label={a.name} className="relative flex w-[49px] items-center justify-center">
            {a.icon}
            {a.active && <span className="absolute bottom-0 h-[2px] w-10 bg-[#b5b5b5]" />}
          </button>
        ))}
      </div>
      <div className="-mr-[3px] ml-auto flex items-center text-white">
        <Svg w={24} h={28} className="mr-3">
          <path d="M1 15C2 9 6 6 10.500 6S19 9 20 15z" fill="#5aa6e6" stroke="none" />
          <path d="M10.500 6c-3 3-4 6-4 9M10.500 6c3 3 4 6 4 9" stroke="#2b70b5" />
          <path d="M10.500 15v9c0 3-3.500 3-3.500.5" stroke="#b7b7b7" strokeWidth={1.5} />
          <path d="m13 2-1 2M17 2l-1 2M21 2l-1 2M19 6l-1 2M23 6l-1 2M22 11l-1 2" stroke="#5aa6e6" strokeWidth={1.300} />
        </Svg>
        {tray.map((t) => (
          <button type="button" key={t.name} aria-label={t.name} className="flex h-full w-6 items-center justify-center">{t.icon}</button>
        ))}
      </div>
    </div>
  );
}

export default function App() {
  return (
    <div lang="zh-CN" className="flex h-screen flex-col overflow-hidden bg-[#efefef] font-['Noto_Sans','Noto_Sans_CJK_SC',sans-serif] text-[#222]">
      <TitleBar />
      <TabStrip />
      <Ribbon />
      <FormulaBar />
      <Sheet />
      <SheetBar />
      <StatusBar />
      <TaskBar />
    </div>
  );
}
